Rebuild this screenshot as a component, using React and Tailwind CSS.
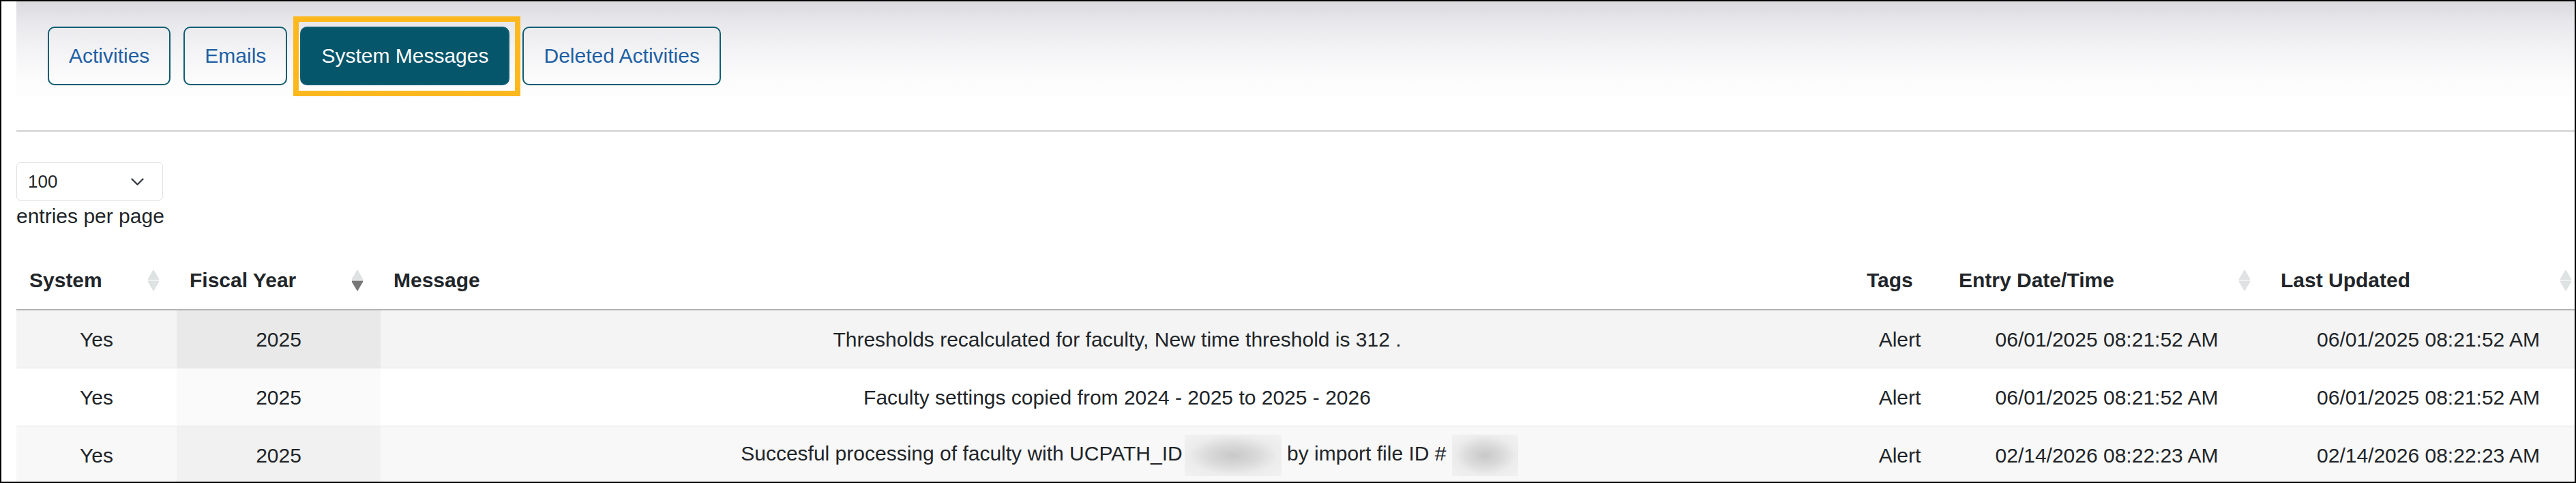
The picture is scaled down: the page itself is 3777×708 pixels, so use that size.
import React from "react";

const FONT = { fontFamily: '"Liberation Sans", Arial, Helvetica, sans-serif' };

function SortIcon({ down = false }) {
  return (
    <svg width="16" height="32" viewBox="0 0 16 32" className="shrink-0">
      <path d="M8 0 L16 13.5 L16 15.5 L0 15.5 L0 13.5 Z" fill="#dfe2e2" />
      <path d="M0 16.5 L16 16.5 L16 18.5 L8 32 L0 18.5 Z" fill={down ? "#777777" : "#dfe2e2"} />
    </svg>
  );
}

function Blur({ w }) {
  return (
    <span
      className={`inline-block h-[61px] align-middle bg-[radial-gradient(ellipse_at_center,#c8c8c8_0%,#d9d9d9_35%,#ececec_65%,#f2f2f2_100%)] ${w}`}
    />
  );
}

const rows = [
  {
    bg: "bg-[#f4f4f4]",
    sbg: "bg-[#e9e9e9]",
    msg: "Thresholds recalculated for faculty, New time threshold is 312 .",
    entry: "06/01/2025 08:21:52 AM",
  },
  {
    bg: "bg-white",
    sbg: "bg-[#fafafa]",
    msg: "Faculty settings copied from 2024 - 2025 to 2025 - 2026",
    entry: "06/01/2025 08:21:52 AM",
  },
  {
    bg: "bg-[#f8f8f8]",
    sbg: "bg-[#f1f1f1]",
    msg: null,
    entry: "02/14/2026 08:22:23 AM",
  },
];

export default function App() {
  const tab =
    "h-[86px] px-[29px] border-2 border-[#0e5d72] rounded-[10px] flex items-center text-[30px] leading-none whitespace-nowrap";
  const td = "h-[85px] p-0 text-center align-middle border-b border-[#dfe2e5] whitespace-nowrap";
  const th =
    "h-[87px] pl-[19px] pr-[26px] py-0 text-left align-middle font-bold border-b-2 border-[#b3b3b3] whitespace-nowrap";
  return (
    <div
      style={FONT}
      className="w-[3777px] h-[708px] border-2 border-black overflow-hidden bg-white text-[#212529]"
    >
      <div className="pl-[22px] w-[3794px]">
        {/* tab strip */}
        <div className="h-[191px] border-b-2 border-[#d0d0d0] pt-[37px] pl-[46px] bg-[linear-gradient(to_bottom,#d9d9de_0px,#e8e8ec_30px,#f3f3f5_70px,#fbfbfc_110px,#ffffff_150px)]">
          <div className="flex gap-[19px]">
            <div className={`${tab} text-[#1e5fa3]`}>Activities</div>
            <div className={`${tab} text-[#1e5fa3]`}>Emails</div>
            <div className="relative">
              <div className={`${tab} bg-[#05566b] text-white`}>System Messages</div>
              <div className="absolute left-[-10px] right-[-16px] top-[-15px] bottom-[-16px] border-[8px] border-[#fdb81e]" />
            </div>
            <div className={`${tab} text-[#1e5fa3]`}>Deleted Activities</div>
          </div>
        </div>

        {/* length select */}
        <div className="mt-[45px] w-[215px] h-[56px] border border-[#dee2e6] rounded-[6px] flex items-center justify-between pl-[16px] pr-[27px] text-[26px] text-[#212529]">
          <span>100</span>
          <svg width="19" height="11" viewBox="0 0 19 11">
            <polyline points="1.5,1.5 9.5,9.5 17.5,1.5" fill="none" stroke="#343a40" strokeWidth="2.4" strokeLinecap="round" strokeLinejoin="round" />
          </svg>
        </div>
        <div className="text-[30px] leading-[45px]">entries per page</div>

        {/* table */}
        <table className="mt-[29px] w-[3772px] table-fixed border-separate border-spacing-0 text-[30px] leading-[45px]">
          <colgroup>
            <col className="w-[235px]" />
            <col className="w-[299px]" />
            <col className="w-[2160px]" />
            <col className="w-[135px]" />
            <col className="w-[472px]" />
            <col className="w-[471px]" />
          </colgroup>
          <thead>
            <tr>
              <th className={th}>
                <div className="flex items-center justify-between">
                  <span>System</span>
                  <SortIcon />
                </div>
              </th>
              <th className={th}>
                <div className="flex items-center justify-between">
                  <span>Fiscal Year</span>
                  <SortIcon down />
                </div>
              </th>
              <th className={th}>Message</th>
              <th className={th}>Tags</th>
              <th className={th}>
                <div className="flex items-center justify-between">
                  <span>Entry Date/Time</span>
                  <SortIcon />
                </div>
              </th>
              <th className={th}>
                <div className="flex items-center justify-between">
                  <span>Last Updated</span>
                  <SortIcon />
                </div>
              </th>
            </tr>
          </thead>
          <tbody>
            {rows.map((r, i) => (
              <tr key={i}>
                <td className={`${td} ${r.bg}`}>Yes</td>
                <td className={`${td} ${r.sbg}`}>2025</td>
                <td className={`${td} ${r.bg}`}>
                  {r.msg ? (
                    r.msg
                  ) : (
                    <span>
                      <span className="inline-block w-[36px]" />
                      Succesful processing of faculty with UCPATH_ID
                      <span className="inline-block w-[3px]" />
                      <Blur w="w-[142px]" />
                      {" by import file ID # "}
                      <Blur w="w-[97px]" />
                    </span>
                  )}
                </td>
                <td className={`${td} ${r.bg}`}>Alert</td>
                <td className={`${td} ${r.bg}`}>{r.entry}</td>
                <td className={`${td} ${r.bg}`}>{r.entry}</td>
              </tr>
            ))}
          </tbody>
        </table>
      </div>
    </div>
  );
}
